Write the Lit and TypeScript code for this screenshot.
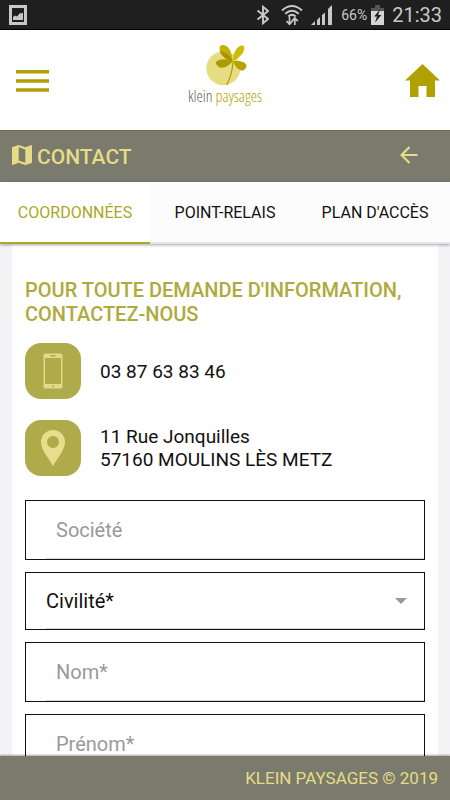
import { LitElement, html, css } from "lit";
import { customElement, state } from "lit/decorators.js";
import { classMap } from "lit/directives/class-map.js";

@customElement("status-bar")
class StatusBar extends LitElement {
  static styles = css`
    :host {
      display: flex;
      align-items: center;
      justify-content: space-between;
      box-sizing: border-box;
      height: 30px;
      padding: 0 8px 0 9px;
      background: #1f1f1f;
      border-bottom: 1px solid #000;
      color: #c8c8c8;
      font-family: Roboto, sans-serif;
    }
    .right {
      display: flex;
      align-items: center;
    }
    svg {
      display: block;
    }
    .wifi {
      margin-left: 12px;
    }
    .signal {
      margin-left: 8px;
    }
    .percent {
      margin-left: 8px;
      font-size: 14px;
    }
    .battery {
      margin-left: 4px;
    }
    .clock {
      margin-left: 8px;
      font-size: 20px;
    }
  `;

  render() {
    return html`
      <svg width="18" height="20" viewBox="0 0 18 20">
        <path fill="#c8c8c8" fill-rule="evenodd" d="M0 0H18V20H0ZM3 3V17H15V3Z" />
        <path fill="#c8c8c8" d="M4 15V12L6 10.500L8 11.500L11 8L12.500 8.500L14 7.500V15Z" />
      </svg>
      <div class="right">
        <svg width="14" height="20" viewBox="0 0 14 20" fill="none" stroke="#c8c8c8" stroke-width="1.900">
          <path d="M2.500 5.500L13 14L8 18.200V1.800L13 6L2.500 14.500" />
        </svg>
        <svg class="wifi" width="22" height="22" viewBox="0 0 22 22" fill="none" stroke="#c8c8c8" stroke-width="2">
          <path d="M1 6.500Q11 -2.500 21 6.500M4.200 9.800Q11 3.600 17.800 9.800M7.300 12.500Q11 9.200 14.700 12.500" />
          <path d="M8.500 13V20M5.500 17L8.500 20.200L11.500 17M13.800 21V14M10.800 17.200L13.800 14L16.800 17.200" stroke-width="1.700" />
        </svg>
        <svg class="signal" width="22" height="20" viewBox="0 0 22 20" fill="#c8c8c8">
          <path d="M0 20L4 16V20ZM6 15L9 12V20H6ZM11 10L14 7.500V20H11ZM17 4L21 0V20H17Z" />
        </svg>
        <span class="percent">66%</span>
        <svg class="battery" width="13" height="20" viewBox="0 0 13 20">
          <path fill="#555" d="M4 0H9V3H13V6H0V3H4Z" />
          <path fill="#d6d6d6" d="M0 6H13V20H0Z" />
          <path fill="#1f1f1f" d="M9 4.500L3 11.500H6L4 17.500L10.500 10H7.200Z" />
        </svg>
        <span class="clock">21:33</span>
      </div>
    `;
  }
}

@customElement("brand-logo")
class BrandLogo extends LitElement {
  static styles = css`
    :host {
      display: flex;
      flex-direction: column;
      align-items: center;
    }
    svg {
      display: block;
    }
    .name {
      font-family: "Open Sans Condensed Light", "Roboto Condensed", "Open Sans Condensed", sans-serif;
      font-size: 16px;
      line-height: 20px;
      color: #5f5e48;
      white-space: nowrap;
    }
    .accent {
      color: #b5a400;
    }
  `;

  render() {
    return html`
      <svg width="44" height="42" viewBox="70 24 132 126">
        <circle cx="131" cy="97" r="51" fill="#e6dd80" />
        <path d="M160 76Q158 115 141 147" fill="none" stroke="#a89a10" stroke-width="3.500" />
        <path fill="#c2b005" d="M159 75C140 73 116 58 120 33C121 25 135 25 143 32C155 43 157 58 159 75Z" />
        <path fill="#a89200" d="M159 75C144 73 126 60 121 44C136 50 152 56 159 75Z" />
        <path fill="#ccbb08" d="M160 74C159 50 175 25 191 29C202 38 183 66 160 74Z" />
        <path fill="#ad9b00" d="M159 76C146 92 132 99 119 94C110 88 107 80 109 77C125 67 143 69 159 76Z" />
        <path fill="#b5a300" d="M161 76C177 73 198 76 201 90C199 98 194 104 186 104C173 101 165 90 161 76Z" />
      </svg>
      <div class="name">klein <span class="accent">paysages</span></div>
    `;
  }
}

@customElement("app-root")
class AppRoot extends LitElement {
  @state() private activeTab = 0;

  private tabs = ["COORDONNÉES", "POINT-RELAIS", "PLAN D'ACCÈS"];

  static styles = css`
    :host {
      display: flex;
      flex-direction: column;
      height: 100vh;
      font-family: Roboto, sans-serif;
      background: #f4f4f7;
      color: #111;
    }
    svg {
      display: block;
    }
    button {
      border: 0;
      padding: 0;
      background: none;
      font: inherit;
      color: inherit;
      cursor: pointer;
    }
    .header {
      display: grid;
      grid-template-columns: 1fr auto 1fr;
      align-items: center;
      height: 100px;
      padding: 0 10px;
      background: #fff;
    }
    .home {
      justify-self: end;
    }
    .menu {
      justify-self: start;
      padding: 2px 6px 0;
    }
    .logo {
      padding-bottom: 10px;
    }
    .titlebar {
      display: flex;
      align-items: center;
      height: 52px;
      box-sizing: border-box;
      padding: 0 32px 4px 12px;
      background: #7b7b6d;
      border-top: 1px solid #6b6b5c;
      color: #e6dc87;
    }
    .title {
      flex: 1;
      margin: 0 0 0 5px;
      padding-top: 4px;
      font-size: 21px;
      font-weight: 500;
      line-height: 24px;
    }
    .tabs {
      display: grid;
      grid-template-columns: repeat(3, 1fr);
      height: 62px;
      position: relative;
      background: #fcfcfd;
      box-shadow: 0 1px 3px rgba(0, 0, 0, 0.35);
    }
    .tab {
      border-bottom: 2px solid #e4e4e6;
      font-size: 16px;
      white-space: nowrap;
    }
    .tab.active {
      background: #fff;
      border-color: #aca726;
      color: #aca726;
    }
    .content {
      flex: 1;
      min-height: 0;
      overflow-y: auto;
      scrollbar-width: none;
      padding: 0 12px;
    }
    .card {
      padding: 34px 13px 24px;
      background: #fff;
    }
    .intro {
      margin: 0 0 17px;
      font-size: 20px;
      font-weight: 500;
      line-height: 24px;
      color: #aeaa3c;
    }
    .row {
      display: flex;
      align-items: center;
      gap: 19px;
      margin-bottom: 21px;
      font-size: 19px;
      line-height: 23px;
    }
    .address {
      font-style: normal;
    }
    .phone {
      color: inherit;
      text-decoration: none;
    }
    .tile {
      display: grid;
      place-items: center;
      width: 56px;
      height: 56px;
      border-radius: 16px;
      background: #b0ab4a;
    }
    .form {
      display: grid;
      gap: 12px;
      padding-top: 3px;
    }
    .field {
      box-sizing: border-box;
      width: 100%;
      height: 60px;
      margin: 0;
      padding: 0 30px 1px;
      border: 1px solid #111;
      border-radius: 0;
      background: linear-gradient(#d8d8d8, #d8d8d8) 20px 100% / 100% 1px no-repeat #fff;
      font-family: inherit;
      font-size: 20px;
      color: #111;
    }
    .field::placeholder {
      color: #999;
      opacity: 1;
    }
    .picker {
      display: grid;
      align-items: center;
    }
    .picker > * {
      grid-area: 1 / 1;
    }
    .select {
      appearance: none;
      height: 58px;
      padding: 0 20px 1px;
    }
    .caret {
      justify-self: end;
      margin-right: 18px;
      pointer-events: none;
    }
    .footer {
      display: flex;
      align-items: center;
      justify-content: flex-end;
      height: 44px;
      padding: 0 12px;
      position: relative;
      background: #7b7b6d;
      box-shadow: 0 -1px 2px rgba(0, 0, 0, 0.35);
      color: #e6dc87;
      font-size: 17px;
    }
  `;

  render() {
    return html`
      <status-bar></status-bar>
      <header class="header">
        <button class="menu" aria-label="Menu">
          <svg width="33" height="24" viewBox="0 0 33 24" fill="#b0a000">
            <path d="M0 1H33V4.500H0ZM0 10.200H33V13.700H0ZM0 19.200H33V22.700H0Z" />
          </svg>
        </button>
        <brand-logo class="logo"></brand-logo>
        <button class="home" aria-label="Accueil">
          <svg width="35" height="33" viewBox="0 0 35 33" fill="#b0a000">
            <path d="M17.500 0L35 16.500H30V33H21.500V22H13.500V33H5V16.500H0Z" />
          </svg>
        </button>
      </header>
      <div class="titlebar">
        <svg width="20" height="20" viewBox="0 0 20 20">
          <path fill="#e6dc87" fill-rule="evenodd" d="M19.400 0L13.300 2.200L6.700 0L0.400 2.100Q0 2.300 0 2.700V19.400Q0 20 0.600 20L6.700 17.700L13.300 20L19.600 17.900Q20 17.700 20 17.300V0.600Q20 0 19.400 0ZM13.300 17.800L6.700 15.500V2.200L13.300 4.500Z" />
        </svg>
        <h1 class="title">CONTACT</h1>
        <button aria-label="Retour">
          <svg width="18" height="18" viewBox="0 0 18 18" fill="none" stroke="#e6dc87" stroke-width="2.200">
            <path d="M17.500 9H2M9.500 1L1.500 9L9.500 17" />
          </svg>
        </button>
      </div>
      <nav class="tabs" role="tablist">
        ${this.tabs.map(
          (label, i) => html`<button
            role="tab"
            class=${classMap({ tab: true, active: i === this.activeTab })}
            aria-selected=${i === this.activeTab ? "true" : "false"}
            @click=${() => (this.activeTab = i)}
          >${label}</button>`
        )}
      </nav>
      <main class="content">
        <div class="card">
          <h2 class="intro">POUR TOUTE DEMANDE D'INFORMATION, CONTACTEZ-NOUS</h2>
          <div class="row">
            <span class="tile">
              <svg width="20" height="36" viewBox="0 0 20 36">
                <rect x="0.500" y="0.500" width="19" height="35" rx="2" fill="#e3d98a" />
                <rect x="2" y="5" width="16" height="26" fill="#b0ab4a" />
                <path d="M7.500 2.700H12.500M10 32.300V34.300" stroke="#b0ab4a" stroke-width="1.500" />
              </svg>
            </span>
            <a class="phone" href="tel:0387638346">03 87 63 83 46</a>
          </div>
          <div class="row">
            <span class="tile">
              <svg width="24" height="36" viewBox="0 0 24 36">
                <path fill="#e8dd8c" fill-rule="evenodd" d="M12 0A12 12 0 0 0 0 12C0 20 7 27 12 36C17 27 24 20 24 12A12 12 0 0 0 12 0ZM12 6A6 6 0 1 1 12 18A6 6 0 1 1 12 6Z" />
              </svg>
            </span>
            <address class="address">11 Rue Jonquilles<br />57160 MOULINS LÈS METZ</address>
          </div>
          <form class="form">
            <input class="field" type="text" aria-label="Société" placeholder="Société" />
            <div class="picker">
              <select class="field select" aria-label="Civilité">
                <option>Civilité*</option>
                <option>Madame</option>
                <option>Monsieur</option>
              </select>
              <svg class="caret" width="12" height="6" viewBox="0 0 12 6">
                <path d="M0 0H12L6 6Z" fill="#999" />
              </svg>
            </div>
            <input class="field" type="text" aria-label="Nom" placeholder="Nom*" required />
            <input class="field" type="text" aria-label="Prénom" placeholder="Prénom*" required />
          </form>
        </div>
      </main>
      <footer class="footer">KLEIN PAYSAGES © 2019</footer>
    `;
  }
}
